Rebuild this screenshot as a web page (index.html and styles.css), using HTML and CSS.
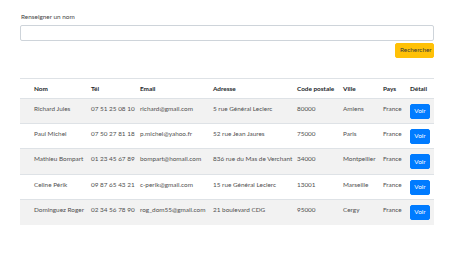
FILE: index.html
```html
<!DOCTYPE html>
<html lang="fr">
<head>
    <meta charset="UTF-8" />
    <meta name="viewport" content="width=device-width, initial-scale=1" />
    <title>Recherche de contacts</title>
    <link rel="stylesheet" href="styles.css">
</head>
<body>

    <!-- Recherche -->
    <div class="recherche">
        <label for="nom">Renseigner un nom</label>
        <input type="text" id="nom" class="champ">
        <div class="actions">
            <button class="btn btn-jaune">Rechercher</button>
        </div>
    </div>

    <!-- Tableau des contacts -->
    <table class="tableau">
        <colgroup>
            <col class="c-nom"><col class="c-tel"><col class="c-mail"><col class="c-adr">
            <col class="c-cp"><col class="c-ville"><col class="c-pays"><col class="c-detail">
        </colgroup>
        <thead>
            <tr>
                <th>Nom</th><th>Tél</th><th>Email</th><th>Adresse</th>
                <th>Code postale</th><th>Ville</th><th>Pays</th><th>Détail</th>
            </tr>
        </thead>
        <tbody>
            <tr>
                <td>Richard Jules</td><td>07 51 25 08 10</td><td>richard@gmail.com</td><td>5 rue Général Leclerc</td>
                <td>80000</td><td>Amiens</td><td>France</td><td><button class="btn btn-bleu">Voir</button></td>
            </tr>
            <tr>
                <td>Paul Michel</td><td>07 50 27 81 18</td><td>p.michel@yahoo.fr</td><td>52 rue Jean Jaures</td>
                <td>75000</td><td>Paris</td><td>France</td><td><button class="btn btn-bleu">Voir</button></td>
            </tr>
            <tr>
                <td>Mathieu Bompart</td><td>01 23 45 67 89</td><td>bompart@homail.com</td><td>836 rue du Mas de Verchant</td>
                <td>34000</td><td>Montpellier</td><td>France</td><td><button class="btn btn-bleu">Voir</button></td>
            </tr>
            <tr>
                <td>Celine Périk</td><td>09 87 65 43 21</td><td>c-perik@gmail.com</td><td>15 rue Général Leclerc</td>
                <td>13001</td><td>Marseille</td><td>France</td><td><button class="btn btn-bleu">Voir</button></td>
            </tr>
            <tr>
                <td>Dominguez Roger</td><td>02 34 56 78 90</td><td>rog_dom55@gmail.com</td><td>21 boulevard CDG</td>
                <td>95000</td><td>Cergy</td><td>France</td><td><button class="btn btn-bleu">Voir</button></td>
            </tr>
        </tbody>
    </table>

</body>
</html>
```

FILE: styles.css
```css
/* Base */
body {
    margin: 0;
    padding: 12px 24px 0 20px;
    background: #fff;
    font-family: "Segoe UI", Lato, "Noto Sans", sans-serif;
    font-size: 6.4px;
    line-height: 1.5;
    color: #212529;
}

/* Bloc de recherche */
.recherche label {
    display: block;
    padding-left: 1px;
    margin-bottom: 3px;
    color: #444;
}

.champ {
    display: block;
    box-sizing: border-box;
    width: 100%;
    height: 16px;
    margin: 0;
    border: 1px solid #ced4da;
    border-radius: 2px;
    background: #fff;
}

.actions {
    display: flex;
    justify-content: flex-end;
    margin-top: 2px;
}

.btn {
    box-sizing: border-box;
    height: 15px;
    padding: 0 4px;
    border: 1px solid transparent;
    border-radius: 2px;
    font-family: inherit;
    font-size: 6.4px;
    line-height: 1;
    cursor: pointer;
}

.btn-jaune {
    width: 39px;
    background: #ffc107;
    border-color: #ffc107;
    color: #3a3a3a;
}

.btn-bleu {
    width: 20px;
    padding: 0;
    background: #007bff;
    border-color: #007bff;
    color: #fff;
}

/* Tableau */
.tableau {
    width: 100%;
    margin-top: 20px;
    border-collapse: collapse;
    table-layout: fixed;
}

.c-nom    { width: 66px; }
.c-tel    { width: 49px; }
.c-mail   { width: 73px; }
.c-adr    { width: 84px; }
.c-cp     { width: 46px; }
.c-ville  { width: 40px; }
.c-pays   { width: 27px; }
.c-detail { width: 29px; }

.tableau th,
.tableau td {
    padding: 5px 5px 4.4px;
    text-align: left;
    vertical-align: top;
    white-space: nowrap;
    line-height: 9px;
    border-top: 1px solid #dee2e6;
}

.tableau th {
    padding-bottom: 5px;
    font-weight: 700;
    border-bottom: 1px solid #dee2e6;
}

.tableau td {
    color: #505050;
}

.tableau th:first-child,
.tableau td:first-child {
    padding-left: 14px;
}

.tableau td:last-child {
    padding-top: 5px;
    padding-bottom: 4.4px;
}

.tableau tbody tr:nth-child(odd) {
    background: #f2f2f2;
}
```
